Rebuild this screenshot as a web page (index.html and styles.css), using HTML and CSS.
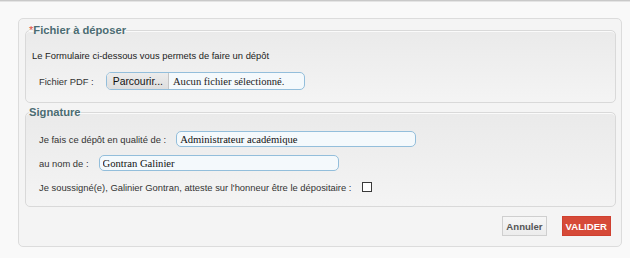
FILE: index.html
```html
<!DOCTYPE html>
<html lang="fr">
<head>
    <meta charset="UTF-8">
    <meta name="viewport" content="width=device-width, initial-scale=1.0">
    <title>Dépôt de fichier</title>
    <link rel="stylesheet" href="styles.css">
</head>
<body>
    <div class="depot-panel">
        <form class="depot-form">
            <fieldset class="bloc">
                <legend><span class="required">*</span>Fichier à déposer</legend>
                <p class="intro">Le Formulaire ci-dessous vous permets de faire un dépôt</p>
                <div class="row">
                    <label class="field-label file-label">Fichier PDF&nbsp;:</label>
                    <div class="file-box">
                        <span class="file-button">Parcourir...</span>
                        <span class="file-name">Aucun fichier sélectionné.</span>
                    </div>
                </div>
            </fieldset>

            <fieldset class="bloc bloc-signature">
                <legend>Signature</legend>
                <div class="row">
                    <label class="field-label" for="qualite">Je fais ce dépôt en qualité de&nbsp;:</label>
                    <input class="text-input" id="qualite" type="text" value="Administrateur académique">
                </div>
                <div class="row">
                    <label class="field-label" for="nom">au nom de&nbsp;:</label>
                    <input class="text-input" id="nom" type="text" value="Gontran Galinier">
                </div>
                <div class="row row-check">
                    <label class="field-label" for="atteste">Je soussigné(e), Galinier Gontran, atteste sur l'honneur être le dépositaire&nbsp;:</label>
                    <input class="check" id="atteste" type="checkbox">
                </div>
            </fieldset>

            <div class="actions">
                <button type="button" class="btn btn-cancel">Annuler</button>
                <button type="button" class="btn btn-submit">VALIDER</button>
            </div>
        </form>
    </div>
</body>
</html>
```

FILE: styles.css
```css
body {
    margin: 0;
    background: #f9f9f9;
    border-top: 1px solid #c9c9c9;
    box-shadow: inset 0 1px 0 #e4e4e4;
    font-family: "Liberation Sans", Arial, sans-serif;
    font-size: 9.4px;
    color: #222;
    padding-top: 17px;
}

.depot-panel {
    margin: 0 8px 0 18px;
    background: #f4f4f4;
    border: 1px solid #dcdcdc;
    border-radius: 5px;
    padding: 4px 5px 10px 6px;
}

.bloc {
    margin: 0;
    border: 1px solid #d9d9d9;
    border-radius: 5px;
    background: linear-gradient(to bottom, #eaeaea 0%, #f4f4f4 100%);
    box-shadow: inset 0 1px 0 #fafafa;
    padding: 12px 6px 12px 6px;
}

.bloc legend {
    font-size: 11.2px;
    font-weight: bold;
    color: #4b6c72;
    line-height: 14px;
    padding: 0;
    margin-left: -3px;
}

.required {
    color: #e0523e;
    font-weight: normal;
}

.bloc-signature {
    margin-top: 2px;
    padding: 12px 6px 11px 13px;
}

.bloc-signature legend {
    margin-left: -10px;
}

.intro {
    margin: 0 0 9px 0;
    line-height: 14px;
}

.row {
    display: flex;
    align-items: center;
    padding-left: 7px;
    min-height: 16px;
}

.bloc-signature .row {
    padding-left: 0;
}

.bloc-signature .row + .row {
    margin-top: 8px;
}

.bloc-signature .row-check {
    margin-top: 7px;
}

.field-label {
    color: #333;
    margin-right: 10px;
}

.file-label {
    margin-right: 12px;
}

.file-box {
    display: flex;
    align-items: stretch;
    width: 197px;
    height: 16px;
    border: 1px solid #93bedb;
    border-radius: 5px;
    background: #f4f9fc;
    overflow: hidden;
}

.file-button {
    display: flex;
    align-items: center;
    padding: 0 5px 0 6px;
    background: linear-gradient(to bottom, #ececec, #dedede);
    border-right: 1px solid #c6c6c6;
    font-size: 10.4px;
    color: #111;
}

.file-name {
    display: flex;
    align-items: center;
    padding-left: 4px;
    font-family: "Liberation Serif", "Times New Roman", serif;
    font-size: 10.6px;
    color: #222;
}

.text-input {
    box-sizing: border-box;
    width: 240px;
    height: 16px;
    margin: 0;
    padding: 0 3px;
    border: 1px solid #93bedb;
    border-radius: 5px;
    background: #f4f9fc;
    font-family: "Liberation Serif", "Times New Roman", serif;
    font-size: 10.6px;
    color: #111;
    outline: none;
}

.check {
    appearance: none;
    -webkit-appearance: none;
    width: 10px;
    height: 10px;
    margin: 0 0 0 1px;
    border: 1px solid #3a3a3a;
    background: #fff;
}

.actions {
    display: flex;
    justify-content: flex-end;
    gap: 15px;
    margin-top: 9px;
    padding-right: 5px;
}

.btn {
    height: 20px;
    font-family: "Liberation Sans", Arial, sans-serif;
    font-size: 9.6px;
    font-weight: bold;
    cursor: pointer;
}

.btn-cancel {
    padding: 0 3px;
    background: linear-gradient(to bottom, #f6f6f6, #ececec);
    border: 1px solid #cfcfcf;
    color: #555;
}

.btn-submit {
    padding: 0 3px;
    background: #d64a38;
    border: 1px solid #cf4030;
    color: #fff;
}
```
